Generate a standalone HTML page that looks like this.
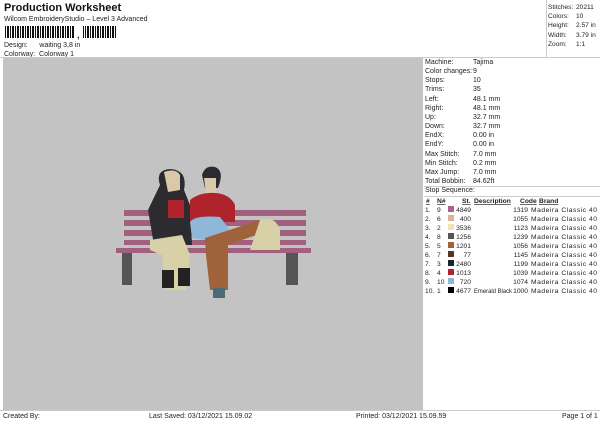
<!DOCTYPE html>
<html><head><style>
*{margin:0;padding:0;box-sizing:border-box}
body{width:600px;height:424px;background:#fff;font-family:"Liberation Sans",sans-serif;font-size:7px;color:#222;position:relative;overflow:hidden}
.a{position:absolute;white-space:nowrap}
</style></head><body>
<div class="a" style="left:4px;top:2px;font-size:11px;font-weight:bold;color:#111">Production Worksheet</div>
<div class="a" style="left:4px;top:16px">Wilcom EmbroideryStudio – Level 3 Advanced</div>
<div class="a" style="left:5px;top:26px;width:112px;height:12px;background:repeating-linear-gradient(90deg,#111 0 1px,#fff 1px 2px,#111 2px 4px,#fff 4px 5px)"></div>
<div class="a" style="left:75px;top:26px;width:8px;height:12px;background:#fff"></div>
<div class="a" style="left:77px;top:30px;font-size:9px;font-weight:bold">,</div>
<div class="a" style="left:4px;top:42px">Design:&nbsp;&nbsp;&nbsp;&nbsp;&nbsp; waiting 3,8 in</div>
<div class="a" style="left:4px;top:51px">Colorway:&nbsp; Colorway 1</div>
<div class="a" style="left:546px;top:0;width:54px;height:57px;border-left:1px solid #ccc"></div>
<div class="a" style="left:548px;top:3px;line-height:9.2px;font-size:6.6px">Stitches:<br>Colors:<br>Height:<br>Width:<br>Zoom:</div>
<div class="a" style="left:576px;top:3px;line-height:9.2px;font-size:6.6px">20211<br>10<br>2.57 in<br>3.79 in<br>1:1</div>
<div class="a" style="left:0;top:57px;width:600px;border-top:1px solid #ccc"></div>
<div class="a" style="left:3px;top:58px;width:420px;height:352px;background:#c3c3c3"></div>
<div class="a" style="left:425px;top:58px;line-height:9.15px">Machine:<br>Color changes:<br>Stops:<br>Trims:<br>Left:<br>Right:<br>Up:<br>Down:<br>EndX:<br>EndY:<br>Max Stitch:<br>Min Stitch:<br>Max Jump:<br>Total Bobbin:</div>
<div class="a" style="left:473px;top:58px;line-height:9.15px">Tajima<br>9<br>10<br>35<br>48.1 mm<br>48.1 mm<br>32.7 mm<br>32.7 mm<br>0.00 in<br>0.00 in<br>7.0 mm<br>0.2 mm<br>7.0 mm<br>84.62ft</div>
<div class="a" style="left:424px;top:186px;width:176px;border-top:1px solid #ccc"></div>
<div class="a" style="left:425px;top:187px">Stop Sequence:</div>
<div class="a" style="left:424px;top:196px;width:176px;border-top:1px solid #ccc"></div>
<svg class="a" style="left:424px;top:195px" width="176" height="100" font-family="Liberation Sans" font-size="6.7" fill="#222">
<g font-weight="bold" text-decoration="underline"><text x="2" y="8">#</text><text x="13" y="8">N#</text><text x="38" y="8">St.</text><text x="50" y="8">Description</text><text x="96" y="8">Code</text><text x="115" y="8">Brand</text></g>
<g>
<text x="1" y="17">1.</text><text x="13" y="17">9</text><rect x="24" y="11" width="6" height="6" fill="#b45e8c"/><text x="47" y="17" text-anchor="end">4849</text><text x="104" y="17" text-anchor="end">1319</text><text x="107" y="17" textLength="66">Madeira Classic 40</text>
<text x="1" y="26">2.</text><text x="13" y="26">6</text><rect x="24" y="20" width="6" height="6" fill="#d8b394"/><text x="47" y="26" text-anchor="end">400</text><text x="104" y="26" text-anchor="end">1055</text><text x="107" y="26" textLength="66">Madeira Classic 40</text>
<text x="1" y="35">3.</text><text x="13" y="35">2</text><rect x="24" y="29" width="6" height="6" fill="#efe1bb"/><text x="47" y="35" text-anchor="end">3536</text><text x="104" y="35" text-anchor="end">1123</text><text x="107" y="35" textLength="66">Madeira Classic 40</text>
<text x="1" y="44">4.</text><text x="13" y="44">8</text><rect x="24" y="38" width="6" height="6" fill="#555"/><text x="47" y="44" text-anchor="end">1256</text><text x="104" y="44" text-anchor="end">1239</text><text x="107" y="44" textLength="66">Madeira Classic 40</text>
<text x="1" y="53">5.</text><text x="13" y="53">5</text><rect x="24" y="47" width="6" height="6" fill="#a0623a"/><text x="47" y="53" text-anchor="end">1201</text><text x="104" y="53" text-anchor="end">1056</text><text x="107" y="53" textLength="66">Madeira Classic 40</text>
<text x="1" y="62">6.</text><text x="13" y="62">7</text><rect x="24" y="56" width="6" height="6" fill="#5a3526"/><text x="47" y="62" text-anchor="end">77</text><text x="104" y="62" text-anchor="end">1145</text><text x="107" y="62" textLength="66">Madeira Classic 40</text>
<text x="1" y="71">7.</text><text x="13" y="71">3</text><rect x="24" y="65" width="6" height="6" fill="#1f2430"/><text x="47" y="71" text-anchor="end">2480</text><text x="104" y="71" text-anchor="end">1199</text><text x="107" y="71" textLength="66">Madeira Classic 40</text>
<text x="1" y="80">8.</text><text x="13" y="80">4</text><rect x="24" y="74" width="6" height="6" fill="#b0222c"/><text x="47" y="80" text-anchor="end">1013</text><text x="104" y="80" text-anchor="end">1039</text><text x="107" y="80" textLength="66">Madeira Classic 40</text>
<text x="1" y="89">9.</text><text x="13" y="89">10</text><rect x="24" y="83" width="6" height="6" fill="#8fb8d8"/><text x="47" y="89" text-anchor="end">720</text><text x="104" y="89" text-anchor="end">1074</text><text x="107" y="89" textLength="66">Madeira Classic 40</text>
<text x="1" y="98">10.</text><text x="13" y="98">1</text><rect x="24" y="92" width="6" height="6" fill="#000"/><text x="47" y="98" text-anchor="end">4677</text><text x="50" y="98" textLength="38" lengthAdjust="spacingAndGlyphs">Emerald Black</text><text x="104" y="98" text-anchor="end">1000</text><text x="107" y="98" textLength="66">Madeira Classic 40</text>
</g></svg>
<svg class="a" style="left:110px;top:160px" width="210" height="145">
<g fill="#555"><rect x="12" y="90" width="10" height="35"/><rect x="176" y="90" width="12" height="35"/></g>
<g fill="#a0607e"><rect x="14" y="50" width="182" height="6"/><rect x="14" y="60" width="182" height="6"/><rect x="14" y="70" width="182" height="6"/><rect x="14" y="80" width="182" height="5"/><rect x="6" y="88" width="195" height="5"/></g>
<path d="M50 25 Q45 10 60 9 Q78 10 74 30 L80 45 L82 85 L44 85 L38 50 Z" fill="#2c2c30"/>
<path d="M54 12 Q66 8 70 15 L70 30 L58 32 Z" fill="#d9c9a8"/>
<rect x="58" y="40" width="16" height="18" fill="#b0222c"/>
<path d="M40 80 L72 75 L80 95 L76 130 L55 130 L52 95 L40 90 Z" fill="#d8d1a8"/>
<rect x="52" y="110" width="12" height="18" fill="#222"/><rect x="68" y="108" width="12" height="18" fill="#222"/>
<path d="M92 15 Q95 5 105 7 Q113 10 110 22 L108 28 L95 28 Z" fill="#2a2a30"/>
<path d="M94 18 L106 18 L106 33 L96 33 Z" fill="#d9c9a8"/>
<path d="M80 40 Q90 32 105 33 Q120 34 125 45 L125 62 L80 62 Z" fill="#b0222c"/>
<path d="M80 62 Q85 55 110 57 L120 70 L95 80 L82 78 Z" fill="#8fb8d8"/>
<path d="M95 78 L150 60 L160 70 L118 85 L118 130 L100 130 L96 95 Z" fill="#a0623a"/>
<path d="M150 60 Q165 55 170 70 L170 90 L140 90 Z" fill="#d8d1a8"/>
<rect x="103" y="128" width="12" height="10" fill="#4a6a78"/>
</svg>
<div class="a" style="left:0;top:410px;width:600px;border-top:1px solid #ccc"></div>
<div class="a" style="left:3px;top:413px">Created By:</div>
<div class="a" style="left:149px;top:413px">Last Saved: 03/12/2021 15.09.02</div>
<div class="a" style="left:356px;top:413px">Printed: 03/12/2021 15.09.59</div>
<div class="a" style="left:562px;top:413px">Page 1 of 1</div>
</body></html>
